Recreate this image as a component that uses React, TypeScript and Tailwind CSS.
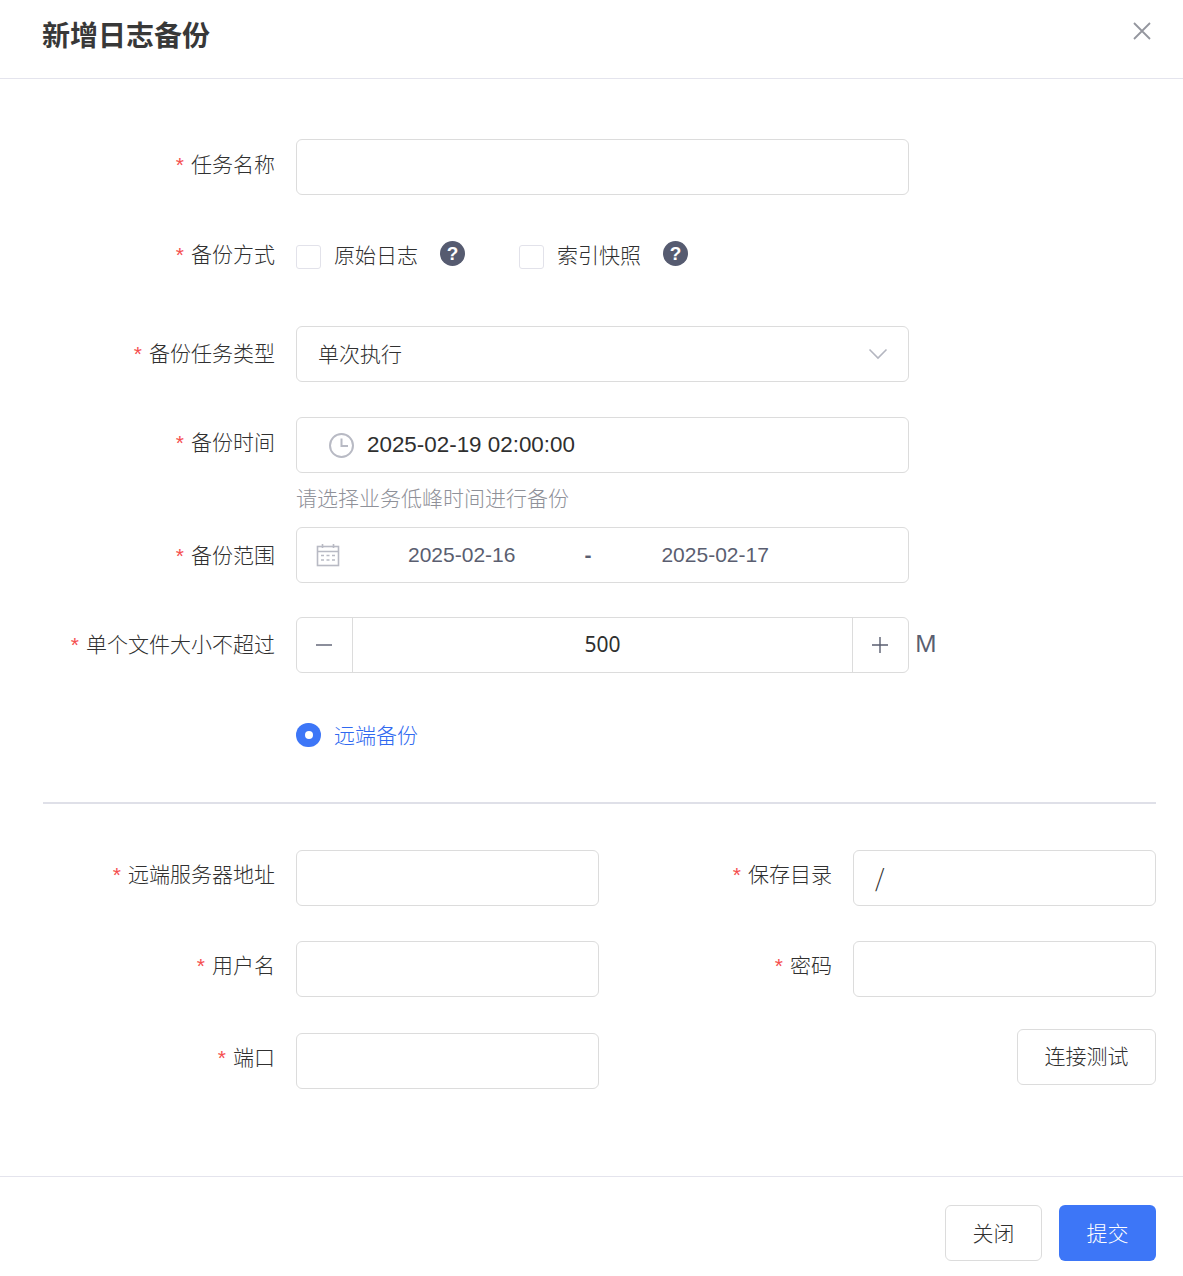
import React from "react";

const font = { fontFamily: '"Noto Sans CJK SC", "Noto Sans", sans-serif', fontWeight: 300 };
const arial = { fontFamily: '"Liberation Sans", sans-serif' };
const noto = { fontFamily: '"Noto Sans", sans-serif', fontWeight: 400 };
const box = "h-14 rounded-md border border-[#dcdcdc] bg-white";

function Label({ text, width = "w-[275px]" }: { text: string; width?: string }) {
  return (
    <div className={`${width} shrink-0 text-right text-[21px] leading-[28px] text-[#303030]`}>
      <span className="mr-[7px] text-[#f54e4e]" style={arial}>*</span>
      {text}
    </div>
  );
}

function Help() {
  return (
    <span className="flex h-[25px] w-[25px] items-center justify-center rounded-full bg-[#565b70] text-[19px] font-bold leading-none text-white" style={arial}>
      ?
    </span>
  );
}

function Check({ text }: { text: string }) {
  return (
    <div className="flex items-start">
      <span className="h-6 w-[25px] rounded-[3px] border border-[#e2e2ea] bg-white" />
      <span className="ml-[13px] -mt-[5px] text-[21px] leading-[28px] text-[#303030]">{text}</span>
      <span className="ml-[22px] -mt-[4px]">
        <Help />
      </span>
    </div>
  );
}

export default function App() {
  return (
    <div className="flex h-[1276px] w-[1183px] flex-col bg-white" style={font}>
      <header className="relative flex h-[79px] shrink-0 items-start border-b border-[#e4e4ed] pl-[42px] pt-[15px]">
        <h1 className="text-[28px] font-bold leading-[38px] text-[#383838]">新增日志备份</h1>
        <svg className="absolute right-[31px] top-[21px]" width="20" height="20" viewBox="0 0 20 20" fill="none" stroke="#94969e" strokeWidth="1.8">
          <path d="M2 2 L18 18 M18 2 L2 18" />
        </svg>
      </header>

      <main className="flex-1 pr-[27px]">
        <div className="mt-[60px] flex gap-[21px]">
          <div className="pt-[10px]"><Label text="任务名称" /></div>
          <div className={`${box} w-[613px]`} />
        </div>

        <div className="mt-[45px] flex gap-[21px]">
          <div className="-mt-[1px]"><Label text="备份方式" /></div>
          <div className="flex gap-[54px] pt-[5px]">
            <Check text="原始日志" />
            <Check text="索引快照" />
          </div>
        </div>

        <div className="mt-[57px] flex gap-[21px]">
          <div className="pt-[12px]"><Label text="备份任务类型" /></div>
          <div className={`${box} flex w-[613px] items-center justify-between pl-[21px] pr-[20px] text-[21px] text-[#303030]`}>
            单次执行
            <svg width="20" height="12" viewBox="0 0 20 12" fill="none" stroke="#b4b6c0" strokeWidth="1.6">
              <path d="M1.5 1.5 L10 10 L18.5 1.5" />
            </svg>
          </div>
        </div>

        <div className="mt-[35px] flex gap-[21px]">
          <div className="pt-[10px]"><Label text="备份时间" /></div>
          <div>
            <div className={`${box} flex w-[613px] items-center pl-[31px] text-[22.4px] text-[#2f2f2f]`} style={arial}>
              <svg width="27" height="27" viewBox="0 0 27 27" fill="none" stroke="#b8bac4" strokeWidth="2">
                <circle cx="13.5" cy="13.5" r="11.5" />
                <path d="M13.5 6.5 V14 H20" />
              </svg>
              <span className="ml-[12px]">2025-02-19 02:00:00</span>
            </div>
            <div className="mt-[10px] text-[21px] leading-[28px] text-[#8f9199]">请选择业务低峰时间进行备份</div>
          </div>
        </div>

        <div className="mt-[16px] flex gap-[21px]">
          <div className="pt-[13px]"><Label text="备份范围" /></div>
          <div className={`${box} flex w-[613px] items-center pl-[19px] text-[21px] text-[#5a5e70]`} style={arial}>
            <svg width="24" height="24" viewBox="0 0 24 24" fill="none" stroke="#b8bac4" strokeWidth="1.6">
              <rect x="1.5" y="3.5" width="21" height="19" />
              <path d="M1.5 8.5 H22.5 M6.5 1 V5 M17.5 1 V5" />
              <path d="M5 12.5 H8 M10.5 12.5 H13.5 M16 12.5 H19 M5 17 H8 M10.5 17 H13.5 M16 17 H19" />
            </svg>
            <span className="ml-[68px]">2025-02-16</span>
            <span className="ml-[69px] font-bold">-</span>
            <span className="ml-[70px]">2025-02-17</span>
          </div>
        </div>

        <div className="mt-[34px] flex gap-[21px]">
          <div className="pt-[12px]"><Label text="单个文件大小不超过" /></div>
          <div className={`${box} flex w-[613px] items-stretch`}>
            <span className="flex w-[56px] items-center justify-center border-r border-[#dcdcdc]">
              <svg width="18" height="18" viewBox="0 0 18 18" stroke="#5a5e70" strokeWidth="1.4"><path d="M0 9 H16" /></svg>
            </span>
            <span className="flex flex-1 items-center justify-center text-[21px] text-[#2f2f2f]" style={noto}>500</span>
            <span className="flex w-[56px] items-center justify-center border-l border-[#dcdcdc]">
              <svg width="18" height="18" viewBox="0 0 18 18" stroke="#5a5e70" strokeWidth="1.4"><path d="M0 9 H16 M8 1 V17" /></svg>
            </span>
          </div>
          <span className="-ml-[15px] pt-[7px] text-[24px] leading-[38px] text-[#5a5e70]" style={noto}>M</span>
        </div>

        <div className="mt-[50px] flex items-center pl-[296px]">
          <span className="flex h-6 w-[25px] items-center justify-center rounded-full bg-[#3d76f7]">
            <span className="h-2 w-2 rounded-full bg-white" />
          </span>
          <span className="ml-[13px] -mt-[2px] text-[21px] leading-[24px] text-[#3069f0]">远端备份</span>
        </div>

        <div className="ml-[43px] mt-[55px] h-[2px] bg-[#dfe0e8]" />

        <div className="mt-[46px] grid grid-cols-[599px_557px]">
          <div className="flex gap-[21px]">
            <div className="pt-[9px]"><Label text="远端服务器地址" /></div>
            <div className={`${box} w-[303px]`} />
          </div>
          <div className="flex gap-[21px]">
            <div className="pt-[9px]"><Label text="保存目录" width="w-[233px]" /></div>
            <div className={`${box} flex w-[303px] items-center pl-[21px] pb-[2px] text-[24px] text-[#2f2f2f]`}>/</div>
          </div>
        </div>

        <div className="mt-[35px] grid grid-cols-[599px_557px]">
          <div className="flex gap-[21px]">
            <div className="pt-[9px]"><Label text="用户名" /></div>
            <div className={`${box} w-[303px]`} />
          </div>
          <div className="flex gap-[21px]">
            <div className="pt-[9px]"><Label text="密码" width="w-[233px]" /></div>
            <div className={`${box} w-[303px]`} />
          </div>
        </div>

        <div className="mt-[32px] grid grid-cols-[599px_557px]">
          <div className="mt-[4px] flex gap-[21px]">
            <div className="pt-[9px]"><Label text="端口" /></div>
            <div className={`${box} w-[303px]`} />
          </div>
          <div className="flex justify-end">
            <button className={`${box} w-[139px] pb-[2px] text-[21px] text-[#303030]`}>连接测试</button>
          </div>
        </div>
      </main>

      <footer className="flex h-[100px] shrink-0 justify-end gap-[17px] border-t border-[#e4e4ed] pr-[27px] pt-[28px]">
        <button className={`${box} w-[97px] text-[21px] text-[#303030]`}>关闭</button>
        <button className="h-14 w-[97px] rounded-md bg-[#3d76f7] text-[21px] text-white">提交</button>
      </footer>
    </div>
  );
}
